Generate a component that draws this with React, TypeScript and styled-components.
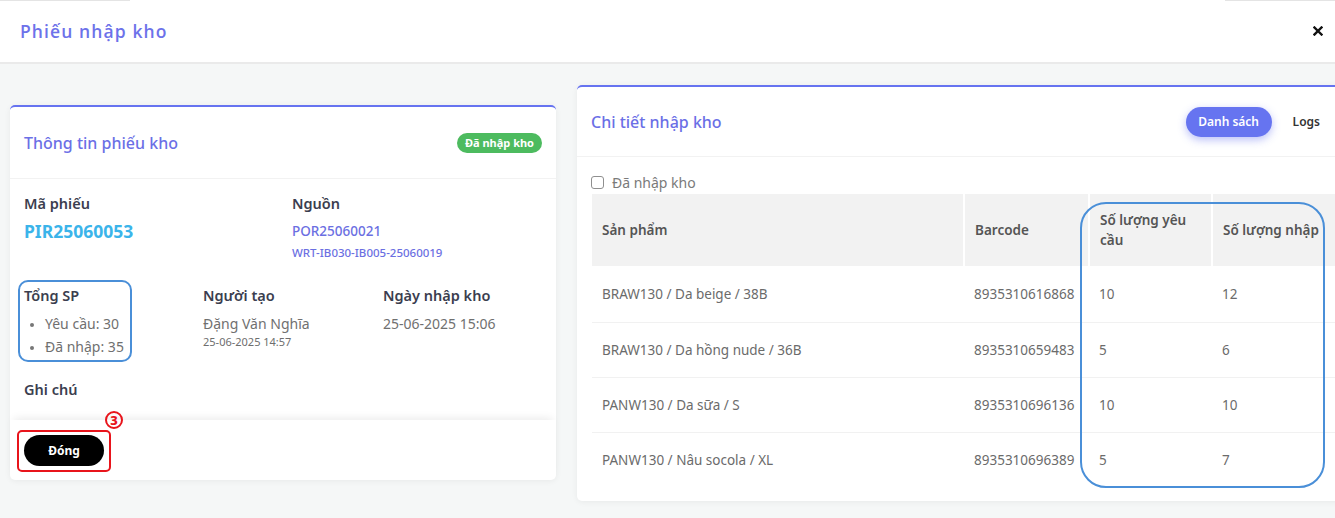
import React from "react";
import styled, { createGlobalStyle } from "styled-components";

const Global = createGlobalStyle`
  html, body { margin: 0; padding: 0; }
  body {
    background: #f5f7f7;
    font-family: "Noto Sans", "Open Sans", "Liberation Sans", sans-serif;
    overflow: hidden;
    width: 1335px;
    height: 518px;
  }
  * { box-sizing: border-box; }
`;

const Page = styled.div`
  width: 1335px;
  height: 518px;
  overflow: hidden;
  display: flex;
  flex-direction: column;
`;

const TopBar = styled.header`
  height: 64px;
  background: #fff;
  border-bottom: 2px solid #eaeaea;
  display: flex;
  align-items: center;
  justify-content: space-between;
  padding: 0 10px 0 20px;
  position: relative;
`;

const TopEdge = styled.span<{ $side: "left" | "right"; $w: number }>`
  position: absolute;
  top: 0;
  ${(p) => (p.$side === "left" ? "left: 0;" : "right: 0;")}
  width: ${(p) => p.$w}px;
  height: 1px;
  background: #e4e4e4;
`;

const ModalTitle = styled.h1`
  margin: 0;
  font-family: "Open Sans", "Noto Sans", sans-serif;
  font-size: 17.5px;
  font-weight: 600;
  letter-spacing: 1.1px;
  color: #6d72ea;
  padding-bottom: 1px;
`;

const CloseBtn = styled.button`
  border: 0;
  background: transparent;
  padding: 0;
  width: 14px;
  height: 14px;
  display: flex;
  align-items: center;
  justify-content: center;
`;

const Main = styled.main`
  flex: 1;
  display: flex;
  align-items: flex-start;
  gap: 21px;
  padding-left: 10px;
`;

const Card = styled.section<{ $top: number; $w: number }>`
  margin-top: ${(p) => p.$top}px;
  width: ${(p) => p.$w}px;
  flex-shrink: 0;
  background: #fff;
  border-top: 2px solid #6673f0;
  border-radius: 5px;
  box-shadow: 0 1px 6px rgba(0, 0, 0, 0.06);
  position: relative;
`;

const CardHead = styled.div<{ $h: number }>`
  height: ${(p) => p.$h}px;
  display: flex;
  align-items: center;
  justify-content: space-between;
  padding: 0 14px;
  border-bottom: 1px solid #f2f2f2;
`;

const CardTitle = styled.h2`
  margin: 0;
  font-size: 16px;
  font-weight: 500;
  color: #6b6fe6;
`;

const Badge = styled.span`
  background: #4dbb5f;
  color: #fff;
  font-size: 11px;
  font-weight: 700;
  height: 20px;
  line-height: 20px;
  padding: 0 8px;
  border-radius: 10px;
`;

const LeftBody = styled.div`
  padding: 14px 14px 21px 14px;
  display: flex;
  flex-direction: column;
`;

const Row = styled.div<{ $cols: string; $gap: number }>`
  display: grid;
  grid-template-columns: ${(p) => p.$cols};
  margin-top: ${(p) => p.$gap}px;
  &:first-child { margin-top: 0; }
`;

const Field = styled.div`
  position: relative;
  display: flex;
  flex-direction: column;
`;

const Label = styled.div`
  font-size: 14.5px;
  font-weight: 600;
  line-height: 20px;
  color: #3b3e4f;
`;

const Code = styled.div`
  margin-top: 6px;
  font-size: 17.5px;
  font-weight: 700;
  line-height: 24px;
  color: #3bb4ea;
`;

const LinkCode = styled.div`
  margin-top: 6px;
  font-size: 13.5px;
  font-weight: 500;
  line-height: 24px;
  color: #6b6fe2;
`;

const SubLink = styled.div`
  margin-top: 2px;
  font-size: 11.5px;
  font-weight: 500;
  line-height: 16px;
  color: #6b6fe2;
`;

const Bullets = styled.ul`
  margin: 7px 0 0;
  padding: 0 0 0 21px;
  list-style: disc;
  color: #7a7a7a;
`;

const Bullet = styled.li`
  font-size: 14px;
  line-height: 23px;
  color: #707070;
  &::marker { font-size: 11px; color: #777; }
`;

const Value = styled.div`
  margin-top: 7px;
  font-size: 14px;
  line-height: 23px;
  color: #707070;
`;

const SmallDate = styled.div`
  font-size: 11px;
  line-height: 14px;
  color: #6e6e6e;
`;

const BlueRing = styled.span<{ $t: number; $l: number; $w: number; $h: number; $r: number }>`
  position: absolute;
  top: ${(p) => p.$t}px;
  left: ${(p) => p.$l}px;
  width: ${(p) => p.$w}px;
  height: ${(p) => p.$h}px;
  border: 2px solid #4a8fd8;
  border-radius: ${(p) => p.$r}px;
  pointer-events: none;
`;

const Footer = styled.div`
  position: relative;
  padding: 15px 14px 14px;
  box-shadow: 0 -6px 8px -4px rgba(0, 0, 0, 0.08);
`;

const BtnWrap = styled.div`
  position: relative;
  display: inline-block;
`;

const CloseAction = styled.button`
  width: 80px;
  height: 31px;
  border: 0;
  border-radius: 16px;
  background: #000;
  color: #fff;
  font-family: inherit;
  font-size: 12px;
  font-weight: 700;
  display: block;
`;

const RedBox = styled.span`
  position: absolute;
  top: -5px;
  left: -7px;
  width: 94px;
  height: 42px;
  border: 2px solid #e8141b;
  border-radius: 5px;
`;

const StepMark = styled.span`
  position: absolute;
  top: -24px;
  left: 81px;
  width: 18px;
  height: 18px;
  border: 2px solid #e8141b;
  border-radius: 50%;
  color: #e8141b;
  font-size: 13px;
  font-weight: 800;
  display: flex;
  align-items: center;
  justify-content: center;
  line-height: 1;
`;

const HeadActions = styled.div`
  display: flex;
  align-items: center;
`;

const PrimaryPill = styled.button`
  width: 86px;
  height: 30px;
  border: 0;
  border-radius: 15px;
  background: #6674f0;
  color: #fff;
  font-family: inherit;
  font-size: 12px;
  font-weight: 600;
  box-shadow: 0 3px 8px rgba(102, 116, 240, 0.45);
`;

const TextTab = styled.button`
  border: 0;
  background: transparent;
  padding: 0 14px 0 21px;
  font-family: inherit;
  font-size: 12px;
  font-weight: 600;
  color: #333;
`;

const RightBody = styled.div`
  padding: 15px 0 14px 14px;
  position: relative;
`;

const CheckRow = styled.label`
  display: flex;
  align-items: center;
  gap: 8px;
  height: 20px;
  font-size: 14px;
  color: #7a7a7a;
`;

const Box = styled.span`
  width: 13px;
  height: 13px;
  border: 1px solid #8f8f8f;
  border-radius: 3px;
  background: #fff;
`;

const Table = styled.table`
  margin-top: 2px;
  margin-left: 1px;
  border-collapse: collapse;
  table-layout: fixed;
  width: 760px;
`;

const Th = styled.th<{ $w: number }>`
  width: ${(p) => p.$w}px;
  height: 72px;
  background: #f2f2f2;
  border-right: 2px solid #fff;
  padding: 0 10px;
  text-align: left;
  vertical-align: middle;
  font-size: 13.5px;
  font-weight: 600;
  line-height: 20px;
  color: #555;
`;

const Td = styled.td`
  height: 55px;
  padding: 0 10px;
  font-size: 13.5px;
  color: #6b6b6b;
  border-bottom: 1px solid #f1f1f1;
`;

const Tr = styled.tr`
  &:first-child td { height: 56px; }
  &:last-child td { border-bottom: 0; }
`;

const rows = [
  ["BRAW130 / Da beige / 38B", "8935310616868", "10", "12"],
  ["BRAW130 / Da hồng nude / 36B", "8935310659483", "5", "6"],
  ["PANW130 / Da sữa / S", "8935310696136", "10", "10"],
  ["PANW130 / Nâu socola / XL", "8935310696389", "5", "7"],
];

export default function App() {
  return (
    <Page>
      <Global />
      <TopBar>
        <TopEdge $side="left" $w={130} />
        <TopEdge $side="right" $w={110} />
        <ModalTitle>Phiếu nhập kho</ModalTitle>
        <CloseBtn aria-label="close">
          <svg width="10" height="10" viewBox="0 0 10 10">
            <path d="M1.5 1.5 L8.5 8.5 M8.5 1.5 L1.5 8.5" stroke="#111" strokeWidth="2.4" strokeLinecap="square" />
          </svg>
        </CloseBtn>
      </TopBar>
      <Main>
        <Card $top={41} $w={546}>
          <CardHead $h={72}>
            <CardTitle>Thông tin phiếu kho</CardTitle>
            <Badge>Đã nhập kho</Badge>
          </CardHead>
          <LeftBody>
            <Row $cols="268px 1fr" $gap={0}>
              <Field>
                <Label>Mã phiếu</Label>
                <Code>PIR25060053</Code>
              </Field>
              <Field>
                <Label>Nguồn</Label>
                <LinkCode>POR25060021</LinkCode>
                <SubLink>WRT-IB030-IB005-25060019</SubLink>
              </Field>
            </Row>
            <Row $cols="179px 180px 1fr" $gap={24}>
              <Field>
                <Label>Tổng SP</Label>
                <Bullets>
                  <Bullet>Yêu cầu: 30</Bullet>
                  <Bullet>Đã nhập: 35</Bullet>
                </Bullets>
                <BlueRing $t={-5} $l={-6} $w={114} $h={82} $r={10} />
              </Field>
              <Field>
                <Label>Người tạo</Label>
                <Value>Đặng Văn Nghĩa</Value>
                <SmallDate>25-06-2025 14:57</SmallDate>
              </Field>
              <Field>
                <Label>Ngày nhập kho</Label>
                <Value>25-06-2025 15:06</Value>
              </Field>
            </Row>
            <Row $cols="1fr" $gap={21}>
              <Field>
                <Label>Ghi chú</Label>
              </Field>
            </Row>
          </LeftBody>
          <Footer>
            <BtnWrap>
              <CloseAction>Đóng</CloseAction>
              <RedBox />
              <StepMark>3</StepMark>
            </BtnWrap>
          </Footer>
        </Card>
        <Card $top={21} $w={771}>
          <CardHead $h={70}>
            <CardTitle>Chi tiết nhập kho</CardTitle>
            <HeadActions>
              <PrimaryPill>Danh sách</PrimaryPill>
              <TextTab>Logs</TextTab>
            </HeadActions>
          </CardHead>
          <RightBody>
            <CheckRow>
              <Box />
              Đã nhập kho
            </CheckRow>
            <Table>
              <thead>
                <tr>
                  <Th $w={372}>Sản phẩm</Th>
                  <Th $w={125}>Barcode</Th>
                  <Th $w={123}>Số lượng yêu cầu</Th>
                  <Th $w={140}>Số lượng nhập</Th>
                </tr>
              </thead>
              <tbody>
                {rows.map((r) => (
                  <Tr key={r[1]}>
                    {r.map((c, i) => (
                      <Td key={i}>{c}</Td>
                    ))}
                  </Tr>
                ))}
              </tbody>
            </Table>
            <BlueRing $t={45} $l={503} $w={245} $h={286} $r={26} />
          </RightBody>
        </Card>
      </Main>
    </Page>
  );
}
